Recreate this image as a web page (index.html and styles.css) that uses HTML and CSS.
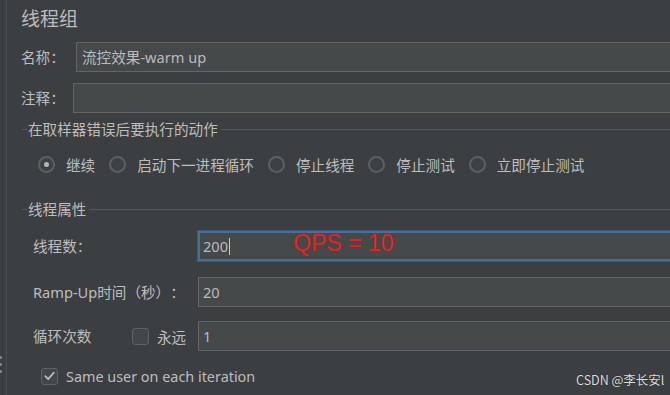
FILE: index.html
```html
<!DOCTYPE html>
<html lang="zh">
<head>
<meta charset="utf-8">
<title>线程组</title>
<link rel="stylesheet" href="styles.css">
</head>
<body>
<div class="app">
  <div class="gutter">
    <div class="grip"><span></span><span></span><span></span></div>
  </div>
  <div class="main">
    <div class="title">线程组</div>
    <div class="row row-name">
      <div class="label label-name">名称：</div>
      <div class="field">流控效果-warm up</div>
    </div>
    <div class="row row-comment">
      <div class="label label-comment">注释：</div>
      <div class="field"></div>
    </div>

    <div class="group-head head-1">
      <span class="line-l"></span>
      <span class="group-title">在取样器错误后要执行的动作</span>
      <span class="line-r"></span>
    </div>
    <div class="radios">
      <div class="radio-item"><span class="radio checked"></span><span>继续</span></div>
      <div class="radio-item"><span class="radio"></span><span>启动下一进程循环</span></div>
      <div class="radio-item"><span class="radio"></span><span>停止线程</span></div>
      <div class="radio-item"><span class="radio"></span><span>停止测试</span></div>
      <div class="radio-item"><span class="radio"></span><span>立即停止测试</span></div>
    </div>

    <div class="group-head head-2">
      <span class="line-l"></span>
      <span class="group-title">线程属性</span>
      <span class="line-r"></span>
    </div>
    <div class="props">
      <div class="row row-threads">
        <div class="label label-prop">线程数：</div>
        <div class="field focused">200<span class="caret"></span></div>
        <div class="annot">QPS = 10</div>
      </div>
      <div class="row row-ramp">
        <div class="label label-prop">Ramp-Up时间（秒）：</div>
        <div class="field">20</div>
      </div>
      <div class="row row-loop">
        <div class="label label-loop">循环次数</div>
        <span class="check"></span>
        <span class="forever">永远</span>
        <div class="field">1</div>
      </div>
      <div class="same-user">
        <span class="check checked">
          <svg viewBox="0 0 16 16" width="16" height="16"><path d="M3.5 8.2 L6.6 11.3 L12.6 4.4" fill="none" stroke="#bdbdbd" stroke-width="1.8" stroke-linecap="round" stroke-linejoin="round"/></svg>
        </span>
        <span class="same-text">Same user on each iteration</span>
      </div>
    </div>
  </div>
  <div class="watermark">CSDN @李长安l</div>
</div>
</body>
</html>
```
FILE: styles.css
```css
html, body {
  margin: 0;
  padding: 0;
  background: #3c3f41;
}
body {
  width: 670px;
  height: 395px;
  overflow: hidden;
  font-family: "Noto Sans", "Noto Sans CJK SC", sans-serif;
  font-size: 14.6px;
  color: #bdbdbd;
  text-spacing-trim: space-all;
}
.app {
  position: relative;
  display: flex;
  width: 670px;
  height: 395px;
  overflow: hidden;
}
.gutter {
  width: 6px;
  flex: none;
  border-right: 1px solid #4d5052;
  display: flex;
  flex-direction: column;
  justify-content: flex-end;
}
.grip {
  display: flex;
  flex-direction: column;
  gap: 4px;
  margin-bottom: 22px;
  margin-left: -1px;
}
.grip span {
  width: 3px;
  height: 3px;
  border-radius: 50%;
  background: #8c8c8c;
}
.main {
  flex: 1;
  min-width: 0;
  padding-left: 14px;
  margin-right: -6px;
  display: flex;
  flex-direction: column;
}
.title {
  margin-top: 6px;
  font-size: 19px;
  line-height: 24px;
  font-family: "Noto Sans CJK SC", sans-serif;
  color: #bbbbbb;
}
.row {
  display: flex;
  align-items: center;
  height: 30px;
}
.row-name { margin-top: 12px; }
.row-comment { margin-top: 11px; }
.label {
  flex: none;
  line-height: 20px;
  white-space: nowrap;
}
.label-name { width: 55px; }
.label-comment { width: 52px; }
.field {
  flex: 1;
  height: 30px;
  box-sizing: border-box;
  background: #45494a;
  border: 1px solid #646464;
  padding-left: 5px;
  display: flex;
  align-items: center;
  line-height: 20px;
  color: #bbbbbb;
  white-space: nowrap;
}
.group-head {
  display: flex;
  align-items: center;
  height: 20px;
}
.head-1 { margin-top: 6px; }
.head-2 { margin-top: 25px; }
.line-l {
  width: 5px;
  margin-left: 1px;
  height: 1px;
  background: #555759;
  flex: none;
}
.group-title {
  padding: 0 3px 0 1px;
  line-height: 20px;
  white-space: nowrap;
}
.line-r {
  flex: 1;
  height: 1px;
  background: #555759;
}
.radios {
  display: flex;
  align-items: center;
  height: 20px;
  margin-top: 15px;
  padding-left: 17px;
  gap: 14px;
}
.radio-item {
  display: flex;
  align-items: center;
  gap: 12px;
  white-space: nowrap;
}
.radio {
  flex: none;
  width: 17px;
  height: 17px;
  margin-right: -1px;
  box-sizing: border-box;
  border-radius: 50%;
  border: 2px solid #5d6062;
  background: #3d4143;
  display: flex;
  align-items: center;
  justify-content: center;
}
.radio.checked::after {
  content: "";
  width: 5px;
  height: 5px;
  border-radius: 50%;
  background: #b5b5b5;
}
.props {
  display: flex;
  flex-direction: column;
  padding-left: 12px;
}
.row-threads {
  margin-top: 12px;
  position: relative;
}
.row-ramp { margin-top: 16px; }
.row-loop { margin-top: 14px; }
.label-prop { width: 165px; }
.label-loop { width: 99px; }
.field.focused {
  border: 2px solid #466f99;
  box-shadow: 0 0 0 1px #3b5a7b;
  padding-left: 3px;
  margin-left: 0;
}
.row-ramp .field, .row-loop .field { padding-left: 4px; }
.caret {
  display: inline-block;
  width: 1px;
  height: 17px;
  background: #c8c8c8;
  margin-left: 1px;
}
.annot {
  position: absolute;
  left: 260px;
  top: -3px;
  font-family: "Liberation Sans", Arial, sans-serif;
  font-size: 23px;
  line-height: 30px;
  color: #f31a1a;
  white-space: nowrap;
}
.check {
  width: 17px;
  height: 17px;
  box-sizing: border-box;
  border: 1.5px solid #5f6264;
  border-radius: 3px;
  background: #43474a;
  flex: none;
  display: flex;
  align-items: center;
  justify-content: center;
}
.check svg { display: block; }
.forever {
  margin-left: 8px;
  width: 41px;
  flex: none;
  white-space: nowrap;
}
.same-user {
  display: flex;
  align-items: center;
  height: 20px;
  margin-top: 15px;
  padding-left: 8px;
  gap: 8px;
}
.same-text {
  white-space: nowrap;
  font-size: 14.4px;
}
.watermark {
  position: absolute;
  left: 576px;
  top: 371px;
  font-family: "Noto Sans CJK SC", sans-serif;
  font-size: 12.5px;
  line-height: 18px;
  color: #dcdcdc;
  text-shadow: 0 0 1px #222;
  white-space: nowrap;
}
```
